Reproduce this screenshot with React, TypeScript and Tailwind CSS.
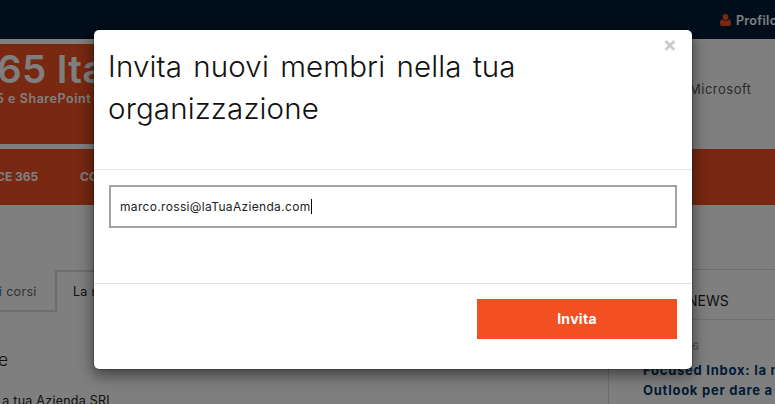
import { useState } from 'react';

const NEWS_LINES = ['Focused Inbox: la n', 'Outlook per dare a'];

function UserIcon() {
	return (
		<svg viewBox="0 0 11 12" className="w-[11px] h-3 shrink-0 fill-[#f25022]" aria-hidden="true">
			<ellipse cx="5.5" cy="3.1" rx="2.9" ry="3.1" />
			<path d="M2.4 5.2C0.8 5.5 0 7 0 9.4 0 11 0.8 12 2.1 12H8.9C10.2 12 11 11 11 9.4 11 7 10.2 5.5 8.6 5.2 7.8 6.2 6.7 6.8 5.5 6.8 4.3 6.8 3.2 6.2 2.4 5.2Z" />
		</svg>
	);
}

function TopBar() {
	return (
		<div className="h-[39px] bg-[#001c36] flex justify-end items-center">
			<div className="w-[55px] flex items-center gap-[5px] shrink-0 whitespace-nowrap text-white">
				<UserIcon />
				<span className="pt-[2px] text-[12.5px] leading-4 font-semibold tracking-[0.3px]">Profilo</span>
			</div>
		</div>
	);
}

function Brand() {
	return (
		<header className="h-[110px] py-[5px] flex justify-between">
			<div className="w-[300px] bg-[#f25022] text-white whitespace-nowrap">
				<div className="h-[46px] -ml-[3px] text-[38.5px] leading-[50px] font-semibold tracking-[0.4px]">65 Ita</div>
				<div className="-ml-[4px] text-[12.5px] leading-[18px] font-semibold tracking-[0.55px]">5 e SharePoint</div>
			</div>
			<div className="w-[86px] pt-[35px] text-[13px] leading-5 tracking-[0.5px] text-[#555]">Microsoft</div>
		</header>
	);
}

function Navigation() {
	return (
		<nav className="h-14 bg-[#f25022] text-white text-[12px] leading-[56px] font-bold flex whitespace-nowrap">
			<span className="w-[84px] -ml-[4px]">CE 365</span>
			<span>CO</span>
		</nav>
	);
}

function Courses() {
	return (
		<main className="w-[608px] pt-[65px] shrink-0 whitespace-nowrap">
			<div className="flex h-[42px] text-[12.5px] leading-[39px] tracking-[0.3px]">
				<div className="w-[55px] pt-[2px] border-b-2 border-[#ddd] text-[#666]">
					<span className="-ml-px text-[#337ab7]">i</span> corsi
				</div>
				<div className="w-[140px] border-2 border-b-0 border-[#ddd] pl-4 text-[#222]">La n</div>
			</div>
			<div className="mt-[36px] -ml-[2px] text-[17.5px] leading-6 font-light text-[#222]">e</div>
			<div className="mt-[19px] -ml-[5px] text-[12.5px] leading-5 tracking-[0.25px] text-[#222]">La tua Azienda SRL</div>
		</main>
	);
}

function News() {
	return (
		<aside className="mt-[64px] h-[200px] flex-1 border-l border-t border-[#ddd] whitespace-nowrap overflow-hidden">
			<h2 className="h-[50px] pt-4 pl-[78px] text-[14px] leading-[30px] text-[#222] border-b border-[#e5e5e5]">
				NEWS
			</h2>
			<div className="pl-[83px] pt-[18px] text-[11px] leading-4 font-semibold text-[#aaa]">6</div>
			<div className="pl-[34px] pt-[6px] text-[13px] leading-5 font-bold tracking-[0.75px] text-[#00396b]">
				{NEWS_LINES.map((line) => (
					<div key={line}>{line}</div>
				))}
			</div>
		</aside>
	);
}

function InviteModal() {
	const [email, setEmail] = useState('marco.rossi@laTuaAzienda.com');

	return (
		<div className="absolute inset-0 bg-black/50 pt-[29px] pl-[93px]">
			<div
				role="dialog"
				className="w-[600px] h-[341px] bg-white bg-clip-padding border border-black/20 rounded-md shadow-[0_5px_15px_rgba(0,0,0,0.5)]"
			>
				<div className="h-[140px] px-[15px] pt-[15px] border-b border-[#e5e5e5] flex justify-between items-start">
					<h4 className="w-[500px] shrink-0 -ml-px text-[29.5px] leading-[42px] font-light tracking-[0.15px] [word-spacing:2.8px] text-[#111]">
						Invita nuovi membri nella tua organizzazione
					</h4>
					<button type="button" aria-label="Chiudi" className="-mt-[10px] text-[21px] leading-5 font-bold text-[#ccc]">
						×
					</button>
				</div>
				<div className="h-[114px] p-[15px] border-b border-[#e5e5e5]">
					<div className="h-[43px] border-2 border-[#a3a3a3] pl-[9px] flex items-center">
						<input
							value={email}
							onChange={(e) => setEmail(e.target.value)}
							className="w-[191px] outline-none text-[12px] tracking-[0.33px] text-[#222]"
						/>
						<span className="w-px h-[15px] bg-black" />
					</div>
				</div>
				<div className="p-[15px] flex justify-end">
					<button type="button" className="w-[200px] h-10 bg-[#f25022] text-white text-sm font-bold tracking-[0.3px]">
						Invita
					</button>
				</div>
			</div>
		</div>
	);
}

export default function App() {
	return (
		<div className="relative w-[775px] h-[404px] overflow-hidden bg-white font-['Inter','Liberation_Sans',sans-serif]">
			<TopBar />
			<Brand />
			<Navigation />
			<div className="flex">
				<Courses />
				<News />
			</div>
			<InviteModal />
		</div>
	);
}
